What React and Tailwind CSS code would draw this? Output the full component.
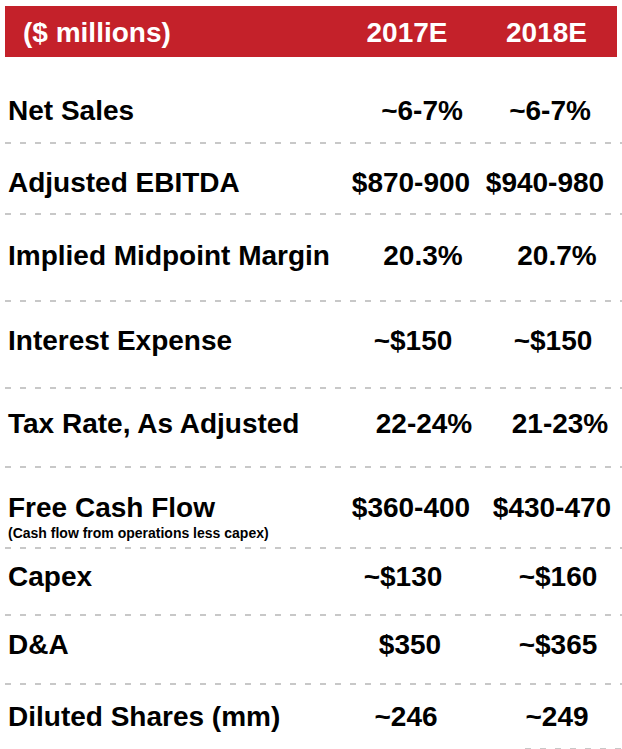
import React from "react";

const rows = [
  { label: "Net Sales", a: "~6-7%", b: "~6-7%", h: "h-[85px]", pt: "pt-[38px]", ca: "pl-[24px]", cb: "pr-[2px]" },
  { label: "Adjusted EBITDA", a: "$870-900", b: "$940-980", h: "h-[69px]", pt: "pt-[23px]", ca: "pl-[2px]", cb: "pr-[12px]" },
  { label: "Implied Midpoint Margin", a: "20.3%", b: "20.7%", h: "h-[85px]", pt: "pt-[25px]", ca: "pl-[26px]", cb: "pl-[12px]" },
  { label: "Interest Expense", a: "~$150", b: "~$150", h: "h-[85px]", pt: "pt-[23px]", ca: "pl-[6px]", cb: "pl-[4px]" },
  { label: "Tax Rate, As Adjusted", a: "22-24%", b: "21-23%", h: "h-[77px]", pt: "pt-[19px]", ca: "pl-[28px]", cb: "pl-[18px]" },
  { label: "Free Cash Flow", sub: "(Cash flow from operations less capex)", a: "$360-400", b: "$430-470", h: "h-[79px]", pt: "pt-[24px]", ca: "pl-[2px]", cb: "pl-[2px]" },
  { label: "Capex", a: "~$130", b: "~$160", h: "h-[65px]", pt: "pt-[12px]", ca: "pr-[14px]", cb: "pl-[14px]" },
  { label: "D&A", a: "$350", b: "~$365", h: "h-[67px]", pt: "pt-[13px]", ca: "pl-[0px]", cb: "pl-[14px]" },
  { label: "Diluted Shares (mm)", a: "~246", b: "~249", h: "h-[63px]", pt: "pt-[16px]", ca: "pr-[8px]", cb: "pl-[12px]" },
];

function Dash({ className = "" }) {
  return (
    <div
      className={
        "h-[2px] bg-[repeating-linear-gradient(to_right,transparent_0_5px,#c8c8c8_5px_11px,transparent_11px_15px)] " +
        className
      }
    />
  );
}

export default function App() {
  return (
    <div className="w-[622px] h-[749px] bg-white overflow-hidden font-['Liberation_Sans',Arial,sans-serif] font-bold text-black">
      <div className="pt-[6px] px-[5px]">
        <div className="h-[51px] pt-[3px] bg-[#c4212a] text-white text-[28px] leading-[32px] grid grid-cols-[335px_140px_1fr] items-center">
          <div className="pl-[18px]">($ millions)</div>
          <div className="text-center pr-[6px]">2017E</div>
          <div className="text-center pr-[4px]">2018E</div>
        </div>
      </div>
      {rows.map((r, i) => (
        <div key={i}>
          <div className={"grid grid-cols-[340px_140px_1fr] " + r.h + " " + r.pt}>
            <div className="pl-[8px]">
              <div className="text-[28px] leading-[32px] whitespace-nowrap">{r.label}</div>
              {r.sub && <div className="text-[14px] leading-[18px] whitespace-nowrap">{r.sub}</div>}
            </div>
            <div className={"text-center text-[28px] leading-[32px] whitespace-nowrap " + r.ca}>{r.a}</div>
            <div className={"text-center text-[28px] leading-[32px] whitespace-nowrap " + r.cb}>{r.b}</div>
          </div>
          {i < rows.length - 1 && <Dash />}
        </div>
      ))}
      <Dash className="ml-[520px]" />
    </div>
  );
}
